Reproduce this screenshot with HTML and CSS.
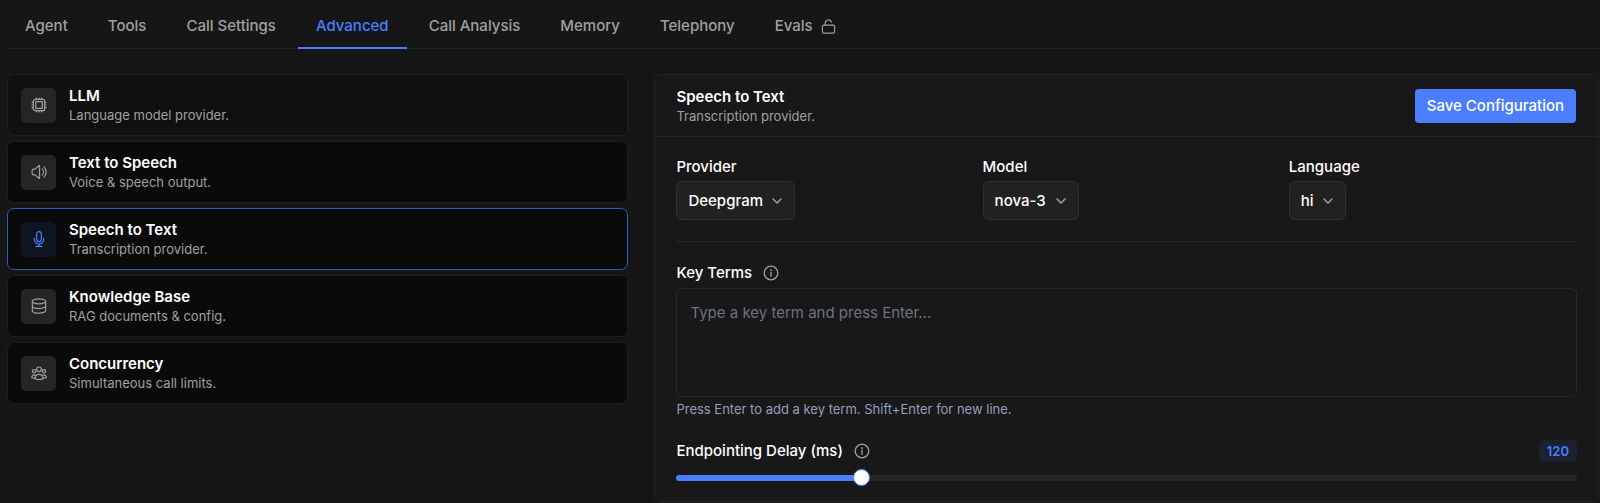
FILE: index.html
```html
<!DOCTYPE html>
<html lang="en">
<head>
<meta charset="utf-8">
<meta name="viewport" content="width=device-width, initial-scale=1">
<title>Agent settings</title>
<link rel="stylesheet" href="styles.css">
</head>
<body>
<nav class="tabs" aria-label="Agent settings">
  <a class="tab" href="#agent">Agent</a>
  <a class="tab" href="#tools">Tools</a>
  <a class="tab" href="#call-settings">Call Settings</a>
  <a class="tab tab-active" href="#advanced" aria-current="page">Advanced</a>
  <a class="tab" href="#call-analysis">Call Analysis</a>
  <a class="tab" href="#memory">Memory</a>
  <a class="tab" href="#telephony">Telephony</a>
  <a class="tab" href="#evals">Evals
    <svg class="icon tab-icon" viewBox="0 0 16 16" aria-hidden="true"><rect x="1.5" y="6.5" width="13" height="8.5" rx="1.5"/><path d="M4.500 6.500V4.500a3.500 3.500 0 0 1 6.700-1.400"/></svg>
  </a>
</nav>
<main class="layout">
  <div class="list">
    <button class="card card-hover" type="button">
      <span class="tile"><svg class="icon" viewBox="0 0 24 24" aria-hidden="true"><rect x="3.500" y="3.500" width="17" height="17" rx="3"/><rect x="7" y="7" width="10" height="10" rx="0.500"/><path d="M8 1.500v2M12 1.500v2M16 1.500v2M8 20.500v2M12 20.500v2M16 20.500v2M1.500 8h2M1.500 12h2M1.500 16h2M20.500 8h2M20.500 12h2M20.500 16h2"/></svg></span>
      <span class="text"><span class="title">LLM</span><span class="subtitle">Language model provider.</span></span>
    </button>
    <button class="card" type="button">
      <span class="tile"><svg class="icon" viewBox="0 0 24 24" aria-hidden="true"><path d="M19.600 4.400a10.800 10.800 0 0 1 0 15.200M16.800 7.200a6.800 6.800 0 0 1 0 9.600M6.300 7.800l5.200-5.200a.8.8 0 0 1 1.300.5v17.800a.8.8 0 0 1-1.300.5l-5.200-5.200H3.500a1.500 1.500 0 0 1-1.400-1 9.800 9.800 0 0 1 0-6.400 1.500 1.500 0 0 1 1.400-1z"/></svg></span>
      <span class="text"><span class="title">Text to Speech</span><span class="subtitle">Voice &amp; speech output.</span></span>
    </button>
    <button class="card card-selected" type="button" aria-pressed="true">
      <span class="tile"><svg class="icon" viewBox="0 0 24 24" aria-hidden="true"><rect x="8.500" y="1" width="7" height="15" rx="3.500"/><path d="M5 11v1.500a7 7 0 0 0 14 0V11M12 19.500V23M7.500 23h9"/></svg></span>
      <span class="text"><span class="title">Speech to Text</span><span class="subtitle">Transcription provider.</span></span>
    </button>
    <button class="card" type="button">
      <span class="tile"><svg class="icon" viewBox="0 0 24 24" aria-hidden="true"><ellipse cx="12" cy="5" rx="10" ry="3.800"/><path d="M2 5v14c0 2 4.500 3.800 10 3.800s10-1.800 10-3.800V5M2 12c0 2 4.500 3.800 10 3.800s10-1.800 10-3.800"/></svg></span>
      <span class="text"><span class="title">Knowledge Base</span><span class="subtitle">RAG documents &amp; config.</span></span>
    </button>
    <button class="card" type="button">
      <span class="tile"><svg class="icon" viewBox="0 0 24 24" aria-hidden="true"><circle cx="12" cy="6.500" r="3.500"/><circle cx="4.500" cy="9.500" r="2.500"/><circle cx="19.500" cy="9.500" r="2.500"/><path d="M6 20.500a6 6.500 0 0 1 12 0c-3.700 1.700-8.300 1.700-12 0zM7.500 15.500c-2.800-1.600-6-.2-6.500 3.200 1.600.8 3.200 1 5 .8M16.500 15.500c2.800-1.600 6-.2 6.500 3.200-1.600.8-3.200 1-5 .8"/></svg></span>
      <span class="text"><span class="title">Concurrency</span><span class="subtitle">Simultaneous call limits.</span></span>
    </button>
  </div>

  <form class="panel">
    <header class="panel-header">
      <div class="text"><h2 class="title">Speech to Text</h2><p class="subtitle">Transcription provider.</p></div>
      <button class="save" type="button">Save Configuration</button>
    </header>
    <div class="panel-body">
      <div class="fields">
        <div class="field">
          <label class="label" for="provider">Provider</label>
          <div class="select-wrap">
            <select class="select" id="provider"><option>Deepgram</option></select>
            <svg class="icon chevron" viewBox="0 0 12 12" aria-hidden="true"><path d="M2 4l4 4 4-4"/></svg>
          </div>
        </div>
        <div class="field">
          <label class="label" for="model">Model</label>
          <div class="select-wrap">
            <select class="select" id="model"><option>nova-3</option></select>
            <svg class="icon chevron" viewBox="0 0 12 12" aria-hidden="true"><path d="M2 4l4 4 4-4"/></svg>
          </div>
        </div>
        <div class="field">
          <label class="label" for="language">Language</label>
          <div class="select-wrap">
            <select class="select" id="language"><option>hi</option></select>
            <svg class="icon chevron" viewBox="0 0 12 12" aria-hidden="true"><path d="M2 4l4 4 4-4"/></svg>
          </div>
        </div>
      </div>

      <div class="terms">
        <div class="label-row">
          <label class="label" for="terms">Key Terms</label>
          <svg class="icon info" viewBox="0 0 16 16" aria-hidden="true"><circle cx="8" cy="8" r="6.800"/><path d="M8 7.300v4M8 4.700v1"/></svg>
        </div>
        <textarea class="textarea" id="terms" placeholder="Type a key term and press Enter..."></textarea>
        <p class="hint">Press Enter to add a key term. Shift+Enter for new line.</p>
      </div>

      <div class="delay">
        <div class="label-row">
          <label class="label" for="delay">Endpointing Delay (ms)</label>
          <svg class="icon info" viewBox="0 0 16 16" aria-hidden="true"><circle cx="8" cy="8" r="6.800"/><path d="M8 7.300v4M8 4.700v1"/></svg>
          <output class="badge" for="delay">120</output>
        </div>
        <input class="slider" id="delay" type="range" min="0" max="600" value="120" style="--fill: 20%">
      </div>
    </div>
  </form>
</main>
</body>
</html>
```
FILE: styles.css
```css
* { box-sizing: border-box; }

body {
  margin: 0;
  padding-left: 7px;
  background: #161616;
  color: #fff;
  font-family: Inter, "Liberation Sans", sans-serif;
  font-size: 15px;
  line-height: 20px;
}

h2, p { margin: 0; }

button, select, textarea { font: inherit; color: inherit; }

.icon {
  display: block;
  flex: none;
  fill: none;
  stroke: currentColor;
  stroke-width: 1.5;
  stroke-linecap: round;
  stroke-linejoin: round;
}

/* Tabs */
.tabs {
  display: flex;
  gap: 4px;
  box-shadow: inset 0 -1px #262626;
}

.tab {
  display: flex;
  align-items: center;
  gap: 8px;
  padding: 16px 18px 11px;
  border-bottom: 2px solid transparent;
  color: #a0a0a0;
  font-weight: 500;
  text-decoration: none;
}

.tab-active {
  border-color: #4580ff;
  color: #4580ff;
}

.tab-icon {
  width: 15px;
  height: 15px;
  stroke-width: 1.2;
}

/* Layout */
.layout {
  display: grid;
  grid-template-columns: minmax(0, 25fr) minmax(0, 38fr);
  gap: 26px;
  align-items: start;
  padding: 25px 1px 0 0;
}

.list {
  display: flex;
  flex-direction: column;
  gap: 5px;
}

.card {
  display: flex;
  align-items: center;
  gap: 13px;
  padding: 11px 13px;
  border: 1px solid #1e1e1e;
  border-radius: 7px;
  background: #0a0a0a;
  text-align: left;
}

.card-hover {
  border-color: #1c202a;
  background: #101010;
}

.card-selected { border-color: #305db8; }

.tile {
  display: grid;
  place-items: center;
  width: 35px;
  height: 35px;
  border-radius: 5px;
  background: #252525;
  color: #a0a0a0;
}

.tile .icon {
  width: 16px;
  height: 16px;
  stroke-width: 1.8;
}

.card-selected .tile {
  background: #0f1521;
  color: #4580ff;
}

.text {
  display: flex;
  flex-direction: column;
}

.title {
  color: #fff;
  font-size: 15px;
  font-weight: 600;
  line-height: 20px;
}

.subtitle {
  color: #a0a0a0;
  font-size: 13px;
  line-height: 18px;
}

/* Panel */
.panel {
  border: 1px solid #242424;
  border-radius: 7px;
  background: #181818;
}

.panel-header {
  display: flex;
  align-items: center;
  justify-content: space-between;
  padding: 12px 22px 11px 21px;
  border-bottom: 1px solid #242424;
}

.save {
  padding: 7px 12px;
  border: 0;
  border-radius: 4px;
  background: #4a7eff;
  font-weight: 500;
}

.panel-body { padding: 20px 21px 14px; }

.fields {
  display: grid;
  grid-template-columns: repeat(3, minmax(0, 1fr));
  gap: 18px;
  padding-bottom: 21px;
  border-bottom: 1px solid #262626;
}

.field {
  display: flex;
  flex-direction: column;
  align-items: flex-start;
  gap: 4px;
}

.label { font-weight: 500; }

.select-wrap {
  display: grid;
  align-items: center;
}

.select {
  grid-area: 1 / 1;
  height: 39px;
  padding: 0 31px 0 11px;
  border: 1px solid #303030;
  border-radius: 6px;
  background: #212121;
  font-weight: 500;
  appearance: none;
}

.chevron {
  grid-area: 1 / 1;
  justify-self: end;
  width: 12px;
  height: 12px;
  margin-right: 12px;
  color: #a0a0a0;
  pointer-events: none;
}

.terms {
  display: flex;
  flex-direction: column;
  padding-top: 21px;
}

.label-row {
  display: flex;
  align-items: center;
  gap: 11px;
}

.info {
  width: 16px;
  height: 16px;
  color: #a0a0a0;
  stroke-width: 1.3;
}

.textarea {
  height: 109px;
  margin-top: 5px;
  padding: 14px 13px;
  border: 1px solid #282828;
  border-radius: 6px;
  background: transparent;
  resize: none;
}

.textarea::placeholder {
  color: #6b7280;
  opacity: 1;
}

.hint {
  margin-top: 2px;
  color: #90a0bc;
  font-size: 13px;
}

.delay { padding-top: 21px; }

.badge {
  margin-left: auto;
  padding: 1px 8px;
  border-radius: 5px;
  background: #1b212e;
  color: #4580ff;
  font-size: 13px;
  font-weight: 600;
}

.slider {
  display: block;
  width: 100%;
  height: 18px;
  margin: 7px 0 0;
  background: none;
  appearance: none;
}

.slider::-webkit-slider-runnable-track {
  height: 6px;
  border-radius: 3px;
  background: linear-gradient(to right, #4a7eff var(--fill), #262626 var(--fill));
}

.slider::-webkit-slider-thumb {
  width: 17px;
  height: 17px;
  margin-top: -6px;
  border: 1px solid #4a7eff;
  border-radius: 50%;
  background: #fff;
  appearance: none;
}
```
